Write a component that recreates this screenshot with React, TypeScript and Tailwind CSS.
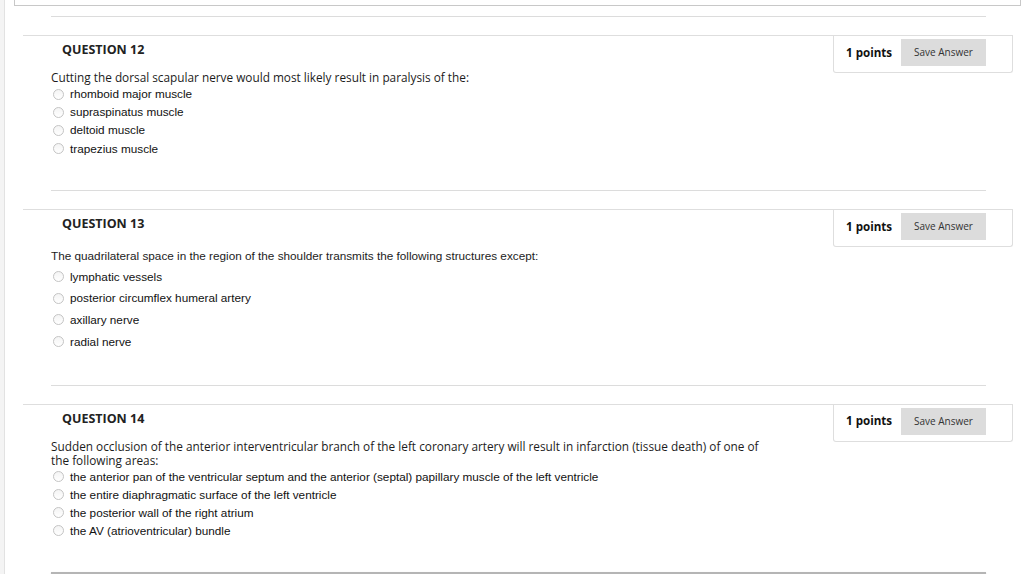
const openSans = "font-['Open_Sans',sans-serif]";
const arial = "font-['Liberation_Sans',Arial,sans-serif]";

type Question = {
  number: number;
  text: string;
  textClass: string;
  textTop: string;
  optionsTop: string;
  rowClass: string;
  options: string[];
};

const questions: Question[] = [
  {
    number: 12,
    text: "Cutting the dorsal scapular nerve would most likely result in paralysis of the:",
    textClass: `${openSans} text-[11.8px] leading-[14px]`,
    textTop: "mt-[11px]",
    optionsTop: "mt-[1px]",
    rowClass: "h-[18.2px]",
    options: ["rhomboid major muscle", "supraspinatus muscle", "deltoid muscle", "trapezius muscle"],
  },
  {
    number: 13,
    text: "The quadrilateral space in the region of the shoulder transmits the following structures except:",
    textClass: `${arial} text-[11.75px] leading-[14px]`,
    textTop: "mt-[16px]",
    optionsTop: "mt-[3px]",
    rowClass: "h-[21.7px]",
    options: ["lymphatic vessels", "posterior circumflex humeral artery", "axillary nerve", "radial nerve"],
  },
  {
    number: 14,
    text: "Sudden occlusion of the anterior interventricular branch of the left coronary artery will result in infarction (tissue death) of one of the following areas:",
    textClass: `${openSans} text-[11.8px] leading-[14px] max-w-[712px]`,
    textTop: "mt-[11px]",
    optionsTop: "mt-[1px]",
    rowClass: "h-[18px]",
    options: [
      "the anterior pan of the ventricular septum and the anterior (septal) papillary muscle of the left ventricle",
      "the entire diaphragmatic surface of the left ventricle",
      "the posterior wall of the right atrium",
      "the AV (atrioventricular) bundle",
    ],
  },
];

function Divider() {
  return (
    <div className="pl-[28px] pr-[27px]">
      <div className="h-px bg-[#dcdcdc]" />
    </div>
  );
}

function Radio() {
  return (
    <span className="ml-[2px] h-[11px] w-[11px] shrink-0 rounded-full border border-[#c4c4c4] bg-gradient-to-b from-[#f4f4f4] to-white" />
  );
}

function QuestionBlock({ q }: { q: Question }) {
  return (
    <section className="mt-[18px] flex border-t border-[#dedede] pb-[32px]">
      <div className="flex-1 pl-[28px]">
        <h3 className={`${openSans} ml-[11px] pt-[5px] text-[12.5px] font-bold leading-[18px] text-[#222]`}>
          QUESTION {q.number}
        </h3>
        <p className={`${q.textClass} ${q.textTop} text-[#1c1c1c]`}>{q.text}</p>
        <ul className={q.optionsTop}>
          {q.options.map((opt) => (
            <li key={opt} className={`${q.rowClass} flex items-center gap-[6px]`}>
              <Radio />
              <span className={`${arial} text-[11.75px] leading-[14px] text-[#111]`}>{opt}</span>
            </li>
          ))}
        </ul>
      </div>
      <div className="h-[37px] w-[180px] self-start rounded-b-[3px] border-x border-b border-[#dedede] pl-[12px] pr-[26px] pt-[3px]">
        <div className="flex h-[27px] items-center">
          <span className={`${openSans} text-[11.6px] font-bold text-[#111]`}>1 points</span>
          <button
            className={`${openSans} ml-auto h-[27px] w-[85px] bg-[#dcdcdc] text-[10px] text-[#333]`}
          >
            Save Answer
          </button>
        </div>
      </div>
    </section>
  );
}

export default function App() {
  return (
    <div className="flex h-[574px] w-[1024px] overflow-hidden bg-white">
      <div className="w-[5px] shrink-0 border-r border-[#e2e2e2] bg-[#f4f4f4]" />
      <div className="flex-1">
        <div className="ml-[9px] mr-[3px] h-[6px] border-x border-b border-[#c8c8c8]" />
        <div className="ml-[18px] mr-[11px] pt-[10px]">
          {questions.map((q) => (
            <div key={q.number}>
              <Divider />
              <QuestionBlock q={q} />
            </div>
          ))}
          <div className="pl-[28px] pr-[27px]">
            <div className="h-[2px] bg-[#b5b5b5] shadow-[0_1px_2px_rgba(0,0,0,0.2)]" />
          </div>
        </div>
      </div>
    </div>
  );
}
